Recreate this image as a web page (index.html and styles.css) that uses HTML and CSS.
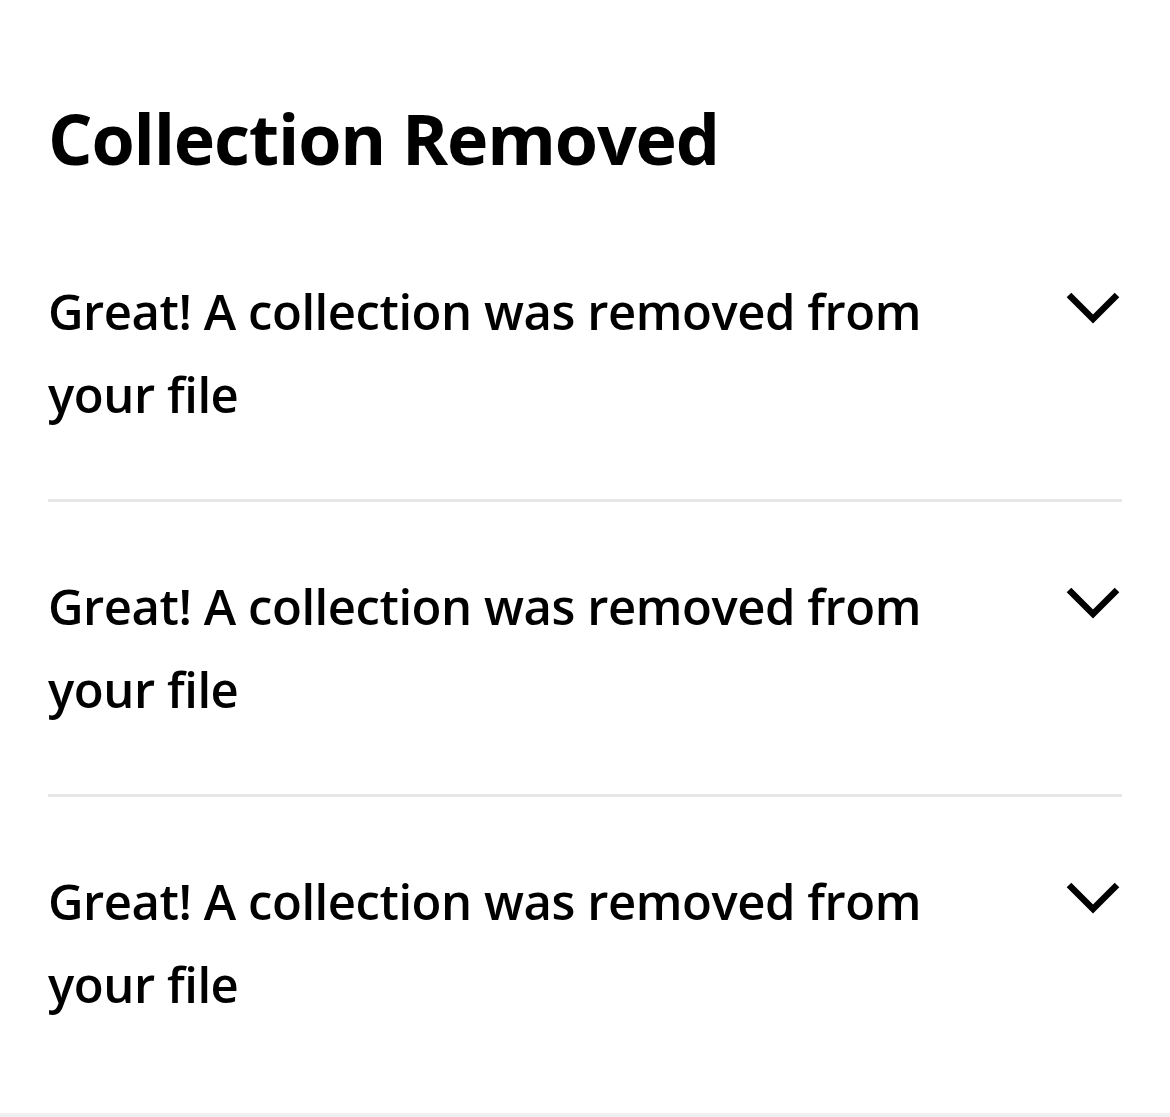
FILE: index.html
```html
<!DOCTYPE html>
<html lang="en">
<head>
    <meta charset="UTF-8">
    <meta name="viewport" content="width=device-width, initial-scale=1.0">
    <title>Collection Removed</title>
    <link rel="stylesheet" href="styles.css">
</head>
<body>
    <div class="panel">
        <h1>Collection Removed</h1>

        <div class="accordion">
            <div class="accordion-item">
                <p class="accordion-title">Great! A collection was removed from your file</p>
                <svg class="chevron" viewBox="0 0 54 32" width="54" height="32">
                    <polyline points="3,3 27,27 51,3" />
                </svg>
            </div>

            <div class="accordion-item">
                <p class="accordion-title">Great! A collection was removed from your file</p>
                <svg class="chevron" viewBox="0 0 54 32" width="54" height="32">
                    <polyline points="3,3 27,27 51,3" />
                </svg>
            </div>

            <div class="accordion-item">
                <p class="accordion-title">Great! A collection was removed from your file</p>
                <svg class="chevron" viewBox="0 0 54 32" width="54" height="32">
                    <polyline points="3,3 27,27 51,3" />
                </svg>
            </div>
        </div>
    </div>
</body>
</html>
```

FILE: styles.css
```css
* {
    margin: 0;
    padding: 0;
    box-sizing: border-box;
    font-family: 'Open Sans', 'Liberation Sans', sans-serif;
}

body {
    background-color: #eeeff0;
    color: #000;
}

.panel {
    background-color: #fff;
    padding: 94px 48px 87px;
}

h1 {
    font-size: 70px;
    font-weight: 700;
    line-height: 88px;
    letter-spacing: -1.2px;
    margin-bottom: 25px;
}

.accordion-item {
    display: flex;
    align-items: flex-start;
    justify-content: space-between;
    gap: 40px;
    padding: 63px 0;
    border-bottom: 3px solid #e6e8e8;
}

.accordion-item:last-child {
    border-bottom: none;
    padding-bottom: 0;
}

.accordion-title {
    font-size: 49px;
    font-weight: 600;
    line-height: 83px;
    letter-spacing: -0.45px;
    max-width: 900px;
}

.chevron {
    flex-shrink: 0;
    margin-top: 22px;
    margin-right: 2px;
}

.chevron polyline {
    fill: none;
    stroke: #000;
    stroke-width: 6.5;
}
```
